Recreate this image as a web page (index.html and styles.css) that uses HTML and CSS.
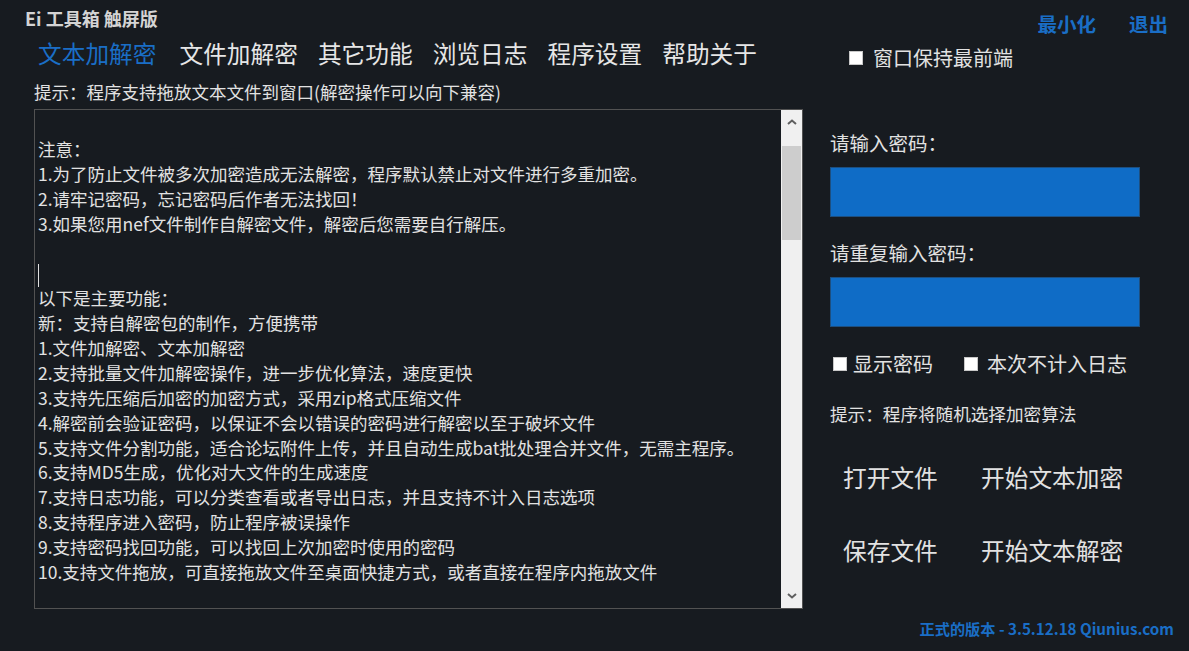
FILE: index.html
```html
<!DOCTYPE html>
<html>
<head>
    <title>Ei 工具箱 触屏版</title>
    <link rel="stylesheet" href="styles.css">
</head>
<body>
    <div class="window">
        <div class="titlebar">
            <div class="title">Ei 工具箱 触屏版</div>
            <div class="controls">
                <span>最小化</span>
                <span>退出</span>
            </div>
        </div>

        <div class="main">
            <div class="left">
                <nav class="tabs">
                    <span class="tab active">文本加解密</span>
                    <span class="tab">文件加解密</span>
                    <span class="tab">其它功能</span>
                    <span class="tab">浏览日志</span>
                    <span class="tab">程序设置</span>
                    <span class="tab">帮助关于</span>
                </nav>
                <div class="hint">提示：程序支持拖放文本文件到窗口(解密操作可以向下兼容)</div>

                <div class="editor">
                    <div class="editor-text">
                        <div class="line"></div>
                        <div class="line">注意：</div>
                        <div class="line">1.为了防止文件被多次加密造成无法解密，程序默认禁止对文件进行多重加密。</div>
                        <div class="line">2.请牢记密码，忘记密码后作者无法找回！</div>
                        <div class="line">3.如果您用nef文件制作自解密文件，解密后您需要自行解压。</div>
                        <div class="line"></div>
                        <div class="line"><span class="caret"></span></div>
                        <div class="line">以下是主要功能：</div>
                        <div class="line">新：支持自解密包的制作，方便携带</div>
                        <div class="line">1.文件加解密、文本加解密</div>
                        <div class="line">2.支持批量文件加解密操作，进一步优化算法，速度更快</div>
                        <div class="line">3.支持先压缩后加密的加密方式，采用zip格式压缩文件</div>
                        <div class="line">4.解密前会验证密码，以保证不会以错误的密码进行解密以至于破坏文件</div>
                        <div class="line">5.支持文件分割功能，适合论坛附件上传，并且自动生成bat批处理合并文件，无需主程序。</div>
                        <div class="line">6.支持MD5生成，优化对大文件的生成速度</div>
                        <div class="line">7.支持日志功能，可以分类查看或者导出日志，并且支持不计入日志选项</div>
                        <div class="line">8.支持程序进入密码，防止程序被误操作</div>
                        <div class="line">9.支持密码找回功能，可以找回上次加密时使用的密码</div>
                        <div class="line">10.支持文件拖放，可直接拖放文件至桌面快捷方式，或者直接在程序内拖放文件</div>
                    </div>
                    <div class="scrollbar">
                        <div class="scroll-btn">
                            <svg width="10" height="6" viewBox="0 0 10 6"><path d="M1 5 L5 1.5 L9 5" fill="none" stroke="#5f5f5f" stroke-width="2"/></svg>
                        </div>
                        <div class="scroll-track">
                            <div class="scroll-thumb"></div>
                        </div>
                        <div class="scroll-btn">
                            <svg width="10" height="6" viewBox="0 0 10 6"><path d="M1 1 L5 4.5 L9 1" fill="none" stroke="#5f5f5f" stroke-width="2"/></svg>
                        </div>
                    </div>
                </div>
            </div>

            <div class="right">
                <label class="check topmost"><span class="box"></span>窗口保持最前端</label>

                <div class="field-label first">请输入密码：</div>
                <div class="password"></div>
                <div class="field-label">请重复输入密码：</div>
                <div class="password"></div>

                <div class="check-row">
                    <label class="check show-pass"><span class="box"></span>显示密码</label>
                    <label class="check no-log"><span class="box"></span>本次不计入日志</label>
                </div>

                <div class="side-hint">提示：程序将随机选择加密算法</div>

                <div class="buttons">
                    <span class="btn">打开文件</span>
                    <span class="btn">开始文本加密</span>
                    <span class="btn">保存文件</span>
                    <span class="btn">开始文本解密</span>
                </div>

                <div class="footer">正式的版本 - 3.5.12.18 Qiunius.com</div>
            </div>
        </div>
    </div>
</body>
</html>
```

FILE: styles.css
```css
body {
    margin: 0;
    background: #171b20;
    font-family: "Noto Sans CJK SC", "Noto Sans", sans-serif;
    color: #e2e2e2;
}
.window {
    width: 1189px;
    height: 651px;
    overflow: hidden;
}
.titlebar {
    height: 40px;
    display: flex;
    justify-content: space-between;
    align-items: flex-start;
    padding: 0 21px 0 25px;
}
.title {
    padding-top: 8px;
    line-height: 20px;
    font-size: 18px;
    font-weight: bold;
    color: #d4d4d4;
}
.controls {
    padding-top: 12px;
    line-height: 24px;
    display: flex;
    gap: 33px;
    font-size: 19.5px;
    font-weight: bold;
    color: #1a6ec6;
}
.main {
    display: flex;
    gap: 27px;
    padding-left: 34px;
}
.left {
    width: 769px;
}
.tabs {
    display: flex;
    gap: 20px;
    padding-left: 4px;
    line-height: 27px;
    font-size: 23.7px;
    color: #e6e6e6;
}
.tab.active {
    color: #1a6ec6;
    margin-right: 3px;
}
.hint {
    margin-top: 13px;
    line-height: 24px;
    font-size: 17.5px;
}
.editor {
    margin-top: 5px;
    height: 500px;
    box-sizing: border-box;
    border: 1px solid #525252;
    display: flex;
}
.editor-text {
    flex: 1;
    padding: 2px 0 0 3px;
    font-size: 17.5px;
    line-height: 24.9px;
    white-space: nowrap;
    overflow: hidden;
}
.line {
    height: 24.9px;
}
.caret {
    display: inline-block;
    width: 0;
    height: 23px;
    border-left: 1px solid #e0e0e0;
    vertical-align: middle;
}
.scrollbar {
    width: 21px;
    background: #f0f0f0;
    display: flex;
    flex-direction: column;
}
.scroll-btn {
    height: 24px;
    display: flex;
    align-items: center;
    justify-content: center;
}
.scroll-track {
    flex: 1;
    padding: 12px 1px 0 1px;
}
.scroll-thumb {
    height: 94px;
    background: #cdcdcd;
}
.right {
    width: 344px;
}
.check {
    display: flex;
    align-items: center;
    font-size: 20px;
    line-height: 26px;
}
.box {
    width: 12px;
    height: 12px;
    background: #ffffff;
    border: 1px solid #c8c8c8;
}
.topmost {
    margin-top: 5px;
    padding-left: 19px;
}
.topmost .box {
    margin-right: 10px;
}
.field-label {
    margin-top: 23px;
    line-height: 26px;
    font-size: 19.5px;
}
.field-label.first {
    margin-top: 59px;
}
.password {
    width: 310px;
    height: 50px;
    box-sizing: border-box;
    margin-top: 11px;
    background: #0f6cc6;
    border: 1px solid #1d4f80;
}
.check-row {
    display: flex;
    margin-top: 24px;
    padding-left: 3px;
}
.show-pass .box {
    margin-right: 6px;
}
.no-log {
    margin-left: 31px;
}
.no-log .box {
    margin-right: 9px;
}
.side-hint {
    margin-top: 25px;
    line-height: 24px;
    font-size: 17.6px;
}
.buttons {
    display: grid;
    grid-template-columns: 138px auto;
    row-gap: 41px;
    margin-top: 35px;
    padding-left: 13px;
    font-size: 23.7px;
    line-height: 32px;
}
.footer {
    margin-top: 52px;
    line-height: 20px;
    text-align: right;
    font-size: 15.2px;
    font-weight: bold;
    color: #1a6ec6;
}
```
